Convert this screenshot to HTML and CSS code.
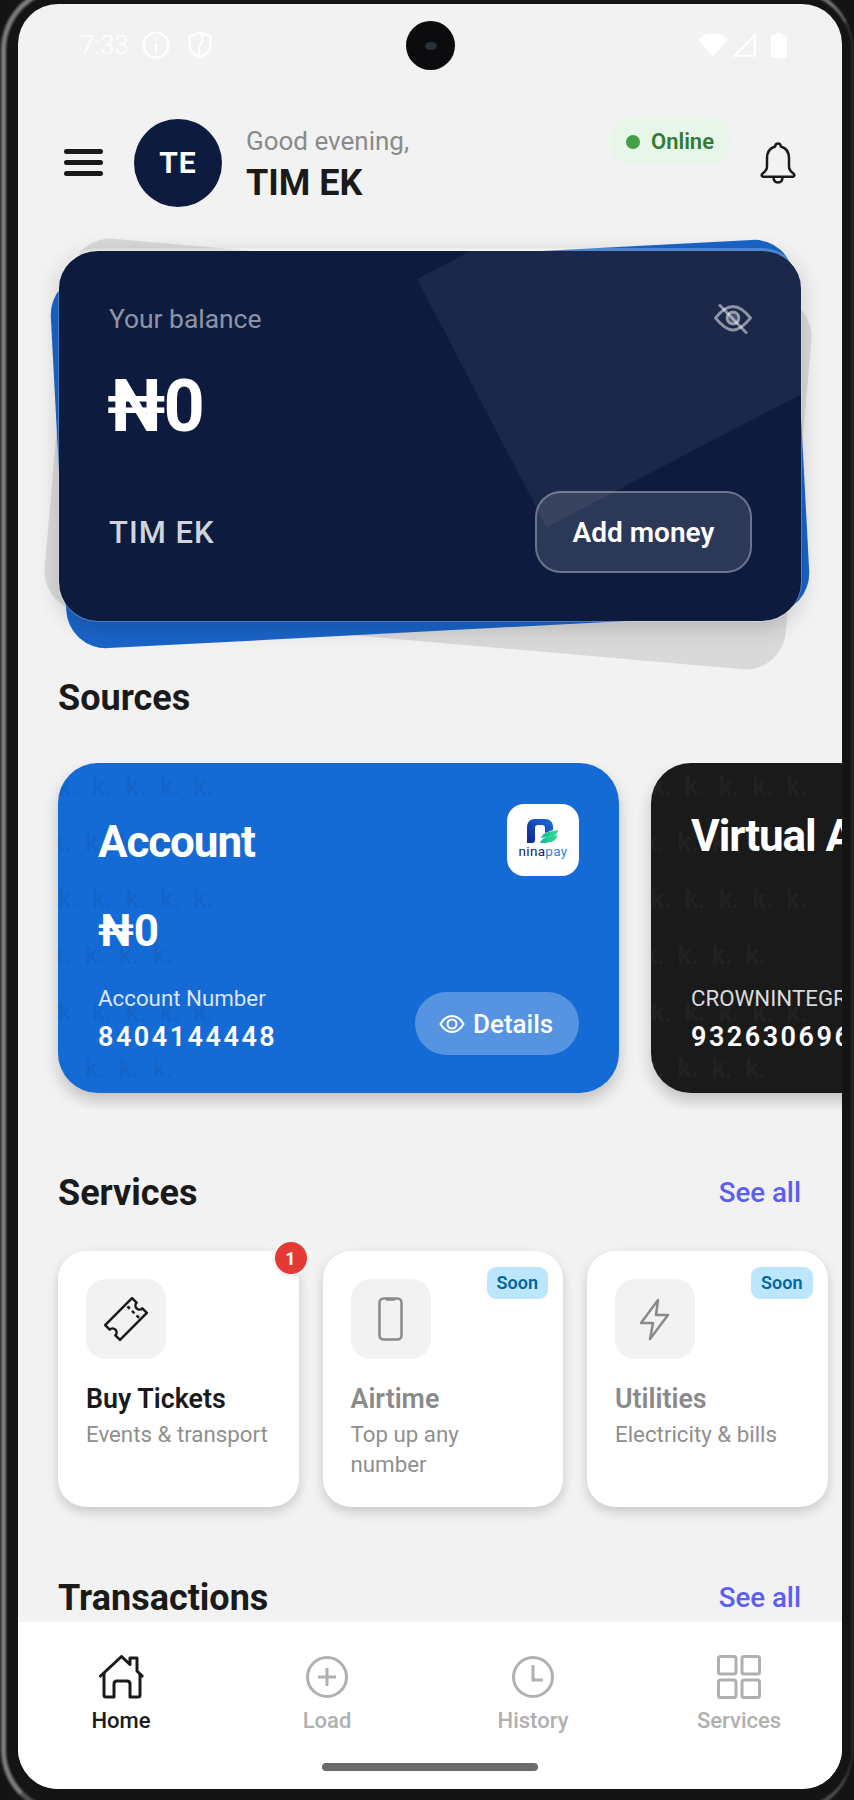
FILE: index.html
```html
<!DOCTYPE html>
<html lang="en">

<head>
    <meta charset="UTF-8">
    <meta name="viewport" content="width=device-width, initial-scale=1.0">
    <title>Home</title>
    <link rel="stylesheet" href="styles.css">
</head>

<body>
    <div class="device">
        <div class="screen">

            <div class="status-bar">
                <div class="status-left">
                    <span class="status-time">7:33</span>
                    <svg class="status-info" viewBox="0 0 28 28">
                        <circle cx="14" cy="14" r="12.5" fill="none" stroke="#fff" stroke-width="2.2" />
                        <path d="M14 12.5v8M14 7.5v2.5" fill="none" stroke="#fff" stroke-width="2.2" />
                    </svg>
                    <svg class="status-shield" viewBox="0 0 24 28">
                        <path d="M12 1.5 22.5 5.5v8c0 6-4 10.5-10.5 13C5.5 24 1.5 19.5 1.5 13.5v-8z M12 1.5c3 4 4 7 1 11-3 4-3 8-1 13.5" fill="none" stroke="#fff" stroke-width="2.2" />
                    </svg>
                </div>
                <div class="camera"><span class="camera-lens"></span></div>
                <div class="status-right">
                    <svg class="status-wifi" viewBox="0 0 30 24"><path d="M0 6.5C4 2.5 9 .5 15 .5s11 2 15 6L15 24z" fill="#fff" /></svg>
                    <svg class="status-signal" viewBox="0 0 24 24"><path d="M22.8 2.5V22.8H2.5z" fill="none" stroke="#fff" stroke-width="2" /></svg>
                    <svg class="status-battery" viewBox="0 0 16 25"><path d="M5 0h6v2h3c1 0 2 1 2 2v19c0 1-1 2-2 2H2c-1 0-2-1-2-2V4c0-1 1-2 2-2h3z" fill="#fff" /></svg>
                </div>
            </div>

            <div class="top-bar">
                <svg class="menu-icon" viewBox="0 0 40 27">
                    <rect x="0" y="0" width="39" height="5" rx="2.5" />
                    <rect x="0" y="11" width="39" height="5" rx="2.5" />
                    <rect x="0" y="22" width="39" height="5" rx="2.5" />
                </svg>
                <div class="avatar">TE</div>
                <div class="greeting">
                    <span class="greeting-hello">Good evening,</span>
                    <span class="greeting-name">TIM EK</span>
                </div>
                <div class="online-pill"><span class="online-dot"></span>Online</div>
                <svg class="bell-icon" viewBox="0 0 36 42">
                    <path d="M18 1.5c-1.5 0-2.6 1-2.9 3C9.5 6 7 10.5 7 16.5v8c0 3-1.8 5-4.3 7-1.7 1.3-1.2 3.2.8 3.2h29c2 0 2.5-1.9.8-3.2-2.5-2-4.3-4-4.3-7v-8c0-6-2.5-10.5-8.1-12-.3-2-1.4-3-2.9-3z" />
                    <path d="M13.5 35c0 3.5 1.8 5.5 4.5 5.5s4.5-2 4.5-5.5" />
                </svg>
            </div>

            <div class="content">
                <div class="balance-wrap">
                    <div class="back-card back-gray"></div>
                    <div class="back-card back-blue"></div>
                    <div class="balance-card">
                        <div class="balance-shape"></div>
                        <div class="balance-top">
                            <span class="balance-label">Your balance</span>
                            <svg class="eye-off" viewBox="0 0 38 30">
                                <path d="M1.5 14C8 6 13 2.5 19 2.5S30 6 36.5 14C30 22 25 26 19 26S8 22 1.5 14z" />
                                <circle class="eye-off-pupil" cx="19" cy="14" r="6" />
                                <path d="M5 .5l28 29" />
                            </svg>
                        </div>
                        <div class="balance-amount">₦0</div>
                        <div class="balance-bottom">
                            <span class="balance-name">TIM EK</span>
                            <span class="add-money">Add money</span>
                        </div>
                    </div>
                </div>

                <h2 class="section-title sources-title">Sources</h2>

                <div class="sources-row">
                    <div class="source-card source-blue">
                        <div class="watermark">
                            <span>k. k. k. k. k.</span>
                            <span class="shifted">k. k. k. k.</span>
                            <span>k. k. k. k. k.</span>
                            <span class="shifted">k. k. k. k.</span>
                            <span>k. k. k. k. k.</span>
                            <span class="shifted">k. k. k. k.</span>
                        </div>
                        <div class="source-head">
                            <span class="source-title">Account</span>
                            <div class="bank-logo">
                                <svg class="bank-mark" viewBox="0 0 32 25">
                                    <defs>
                                        <linearGradient id="ninaBlue" x1="1" y1="0" x2="0" y2="1">
                                            <stop offset="0" stop-color="#1d6fe0" />
                                            <stop offset="1" stop-color="#10238f" />
                                        </linearGradient>
                                        <linearGradient id="ninaGreen" x1="0" y1="0" x2="1" y2="0">
                                            <stop offset="0" stop-color="#0fb6a0" />
                                            <stop offset="1" stop-color="#35dc8c" />
                                        </linearGradient>
                                    </defs>
                                    <path d="M0 24V9C0 3 3 0 8 0h10c5 0 8 3 8 8v3l-8 3V9c0-2-1-3-3-3h-4c-2 0-3 1-3 3v12c0 2-1 3-3 3z" fill="url(#ninaBlue)" />
                                    <path d="M14 19c1-3 3-5 7-6l10-2c0 3-2 5-5 6z" fill="url(#ninaGreen)" />
                                    <path d="M13 24c1-3 3-5 7-6l10-2c0 4-3 6-6 7-4 1-7 1-11 1z" fill="url(#ninaGreen)" />
                                </svg>
                                <span class="bank-name">nina<span class="bank-name-pay">pay</span></span>
                            </div>
                        </div>
                        <div class="source-amount">₦0</div>
                        <div class="source-bottom">
                            <div class="source-info">
                                <span class="source-label">Account Number</span>
                                <span class="source-number">8404144448</span>
                            </div>
                            <div class="details-btn">
                                <svg class="details-eye" viewBox="0 0 26 20">
                                    <path d="M1.5 10C5 4 9 2 13 2s8 2 11.5 8C21 16 17 18 13 18S5 16 1.5 10z" />
                                    <circle cx="13" cy="10" r="4.5" />
                                </svg>
                                Details
                            </div>
                        </div>
                    </div>

                    <div class="source-card source-dark">
                        <div class="watermark">
                            <span>k. k. k. k. k.</span>
                            <span class="shifted">k. k. k. k.</span>
                            <span>k. k. k. k. k.</span>
                            <span class="shifted">k. k. k. k.</span>
                            <span>k. k. k. k. k.</span>
                            <span class="shifted">k. k. k. k.</span>
                        </div>
                        <div class="source-head">
                            <span class="source-title source-title-high">Virtual Account</span>
                        </div>
                        <div class="source-bottom">
                            <div class="source-info">
                                <span class="source-label">CROWNINTEGRATED</span>
                                <span class="source-number">9326306961</span>
                            </div>
                        </div>
                    </div>
                </div>

                <div class="section-head services-head">
                    <h2 class="section-title">Services</h2>
                    <span class="see-all">See all</span>
                </div>

                <div class="services-row">
                    <div class="service-card">
                        <span class="count-badge">1</span>
                        <div class="service-icon">
                            <svg class="ticket-icon" viewBox="0 0 44 44">
                                <g transform="rotate(-45 22 22)">
                                    <path d="M3 11.5H41V18a4 4 0 0 0 0 8V32.5H3V26a4 4 0 0 0 0-8z" />
                                    <path d="M32 14v17" stroke-dasharray="3.5 3" />
                                </g>
                            </svg>
                        </div>
                        <div class="service-name">Buy Tickets</div>
                        <div class="service-desc">Events &amp; transport</div>
                    </div>

                    <div class="service-card service-soon">
                        <span class="soon-badge">Soon</span>
                        <div class="service-icon">
                            <svg class="phone-icon" viewBox="0 0 25 44">
                                <rect x="1.5" y="1.5" width="22" height="41" rx="4" />
                                <path d="M8 2.5h9" />
                            </svg>
                        </div>
                        <div class="service-name">Airtime</div>
                        <div class="service-desc">Top up any number</div>
                    </div>

                    <div class="service-card service-soon">
                        <span class="soon-badge">Soon</span>
                        <div class="service-icon">
                            <svg class="bolt-icon" viewBox="0 0 32 43">
                                <path d="M19 2 2 25h12l-3 16 18-24H17z" />
                            </svg>
                        </div>
                        <div class="service-name">Utilities</div>
                        <div class="service-desc">Electricity &amp; bills</div>
                    </div>
                </div>

                <div class="section-head transactions-head">
                    <h2 class="section-title">Transactions</h2>
                    <span class="see-all">See all</span>
                </div>
            </div>

            <div class="bottom-nav">
                <div class="nav-items">
                    <div class="nav-item nav-active">
                        <svg class="nav-icon" viewBox="0 0 48 44">
                            <path d="M2.5 22 24.5 1.5 33 9.5V3h7v13l6 6" />
                            <path d="M7 18v22q0 2 2 2h8V29q0-3 3-3h10q3 0 3 3v13h8q2 0 2-2V18" />
                        </svg>
                        <span>Home</span>
                    </div>
                    <div class="nav-item">
                        <svg class="nav-icon" viewBox="0 0 44 44">
                            <circle cx="22" cy="22" r="19.5" />
                            <path d="M22 13v18M13 22h18" />
                        </svg>
                        <span>Load</span>
                    </div>
                    <div class="nav-item">
                        <svg class="nav-icon" viewBox="0 0 44 44">
                            <circle cx="22" cy="22" r="19.5" />
                            <path d="M22 10v15h10" />
                        </svg>
                        <span>History</span>
                    </div>
                    <div class="nav-item">
                        <svg class="nav-icon" viewBox="0 0 44 44">
                            <rect x="1.5" y="1.5" width="17.5" height="17.5" rx="2" />
                            <rect x="25" y="1.5" width="17.5" height="17.5" rx="2" />
                            <rect x="1.5" y="25" width="17.5" height="17.5" rx="2" />
                            <rect x="25" y="25" width="17.5" height="17.5" rx="2" />
                        </svg>
                        <span>Services</span>
                    </div>
                </div>
                <div class="home-bar"></div>
            </div>

        </div>
    </div>
</body>

</html>
```

FILE: styles.css
```css
body {
    margin: 0;
    padding: 0;
    font-family: 'Roboto', 'Liberation Sans', sans-serif;
    background-color: #141414;
}

.device {
    position: relative;
    width: 854px;
    height: 1800px;
    padding: 4px 12px 11px 18px;
    box-sizing: border-box;
    background-color: #141414;
    overflow: hidden;
}

.device::before {
    content: "";
    position: absolute;
    left: 1px;
    right: 1px;
    top: -14px;
    bottom: -14px;
    border: 5px solid #7d7d7d;
    border-right-width: 1px;
    border-color: #7d7d7d #444 #555 #7d7d7d;
    border-radius: 64px;
    filter: blur(1px);
}

.screen {
    position: relative;
    display: flex;
    flex-direction: column;
    height: 100%;
    background-color: #f2f2f2;
    border-radius: 40px;
    overflow: hidden;
}

/* status bar */
.status-bar {
    position: relative;
    display: flex;
    justify-content: space-between;
    align-items: center;
    height: 82px;
    flex: none;
    padding: 0 55px 0 62px;
    box-sizing: border-box;
}

.status-left,
.status-right {
    display: flex;
    align-items: center;
    color: white;
}

.status-time {
    font-size: 26px;
    font-weight: 300;
    width: 62px;
}

.status-info {
    width: 28px;
    height: 28px;
    margin-right: 18px;
}

.status-shield {
    width: 24px;
    height: 28px;
}

.camera {
    position: absolute;
    left: 388px;
    top: 17px;
    width: 49px;
    height: 49px;
    display: flex;
    justify-content: center;
    align-items: center;
    border-radius: 50%;
    background-color: #0c0c0e;
}

.camera-lens {
    width: 12px;
    height: 8px;
    border-radius: 50%;
    background-color: #26323e;
}

.status-wifi {
    width: 30px;
    height: 24px;
    margin-right: 4px;
}

.status-signal {
    width: 24px;
    height: 24px;
    margin-right: 15px;
}

.status-battery {
    width: 16px;
    height: 25px;
}

/* header */
.top-bar {
    display: flex;
    align-items: center;
    flex: none;
    height: 89px;
    margin-top: 32px;
    padding: 0 46px;
}

.menu-icon {
    width: 40px;
    height: 27px;
    fill: #1a1a1a;
    margin-right: 30px;
    flex: none;
}

.avatar {
    width: 88px;
    height: 88px;
    display: flex;
    justify-content: center;
    align-items: center;
    flex: none;
    margin-right: 24px;
    border-radius: 50%;
    background-color: #0d1b3e;
    color: white;
    font-size: 30px;
    font-weight: 700;
    letter-spacing: 1px;
}

.greeting {
    display: flex;
    flex-direction: column;
    flex: 1;
    padding-top: 5px;
}

.greeting-hello {
    font-size: 26px;
    line-height: 32px;
    color: #8a8a8a;
}

.greeting-name {
    font-size: 36px;
    line-height: 46px;
    font-weight: 700;
    color: #1a1a1a;
    margin-top: 3px;
}

.online-pill {
    display: flex;
    align-items: center;
    align-self: flex-start;
    height: 47px;
    padding: 0 16px;
    border-radius: 20px;
    background-color: #e8f5e9;
    color: #2e7d32;
    font-size: 22px;
    font-weight: 600;
}

.online-dot {
    width: 14px;
    height: 14px;
    margin-right: 11px;
    border-radius: 50%;
    background-color: #43a047;
}

.bell-icon {
    width: 36px;
    height: 42px;
    margin-left: 30px;
    fill: none;
    stroke: #1a1a1a;
    stroke-width: 2.5;
    stroke-linejoin: round;
    flex: none;
}

/* scrolling content, cut off by the bottom nav */
.content {
    flex: 1;
    min-height: 0;
    overflow: hidden;
}

.balance-wrap {
    position: relative;
    width: 744px;
    height: 374px;
    margin: 41px 0 0 40px;
}

.back-card {
    position: absolute;
    left: 0;
    top: 0;
    width: 100%;
    height: 100%;
    border-radius: 40px;
}

.back-gray {
    background-color: rgba(0, 0, 0, 0.1);
    transform: translate(-2px, 19px) rotate(5deg);
}

.back-blue {
    background-color: #1a64c8;
    transform: translate(0, 9px) rotate(-3deg);
}

.balance-card {
    position: relative;
    display: flex;
    flex-direction: column;
    height: 100%;
    padding: 53px 49px 48px 50px;
    box-sizing: border-box;
    border: 1px solid rgba(255, 255, 255, 0.22);
    border-top-width: 3px;
    border-radius: 40px;
    background-color: #0d1b3e;
    background-clip: padding-box;
    box-shadow: 0 6px 22px rgba(0, 0, 0, 0.16);
    overflow: hidden;
    color: white;
}

.balance-shape {
    position: absolute;
    left: 358px;
    top: 28px;
    width: 600px;
    height: 280px;
    background-color: rgba(255, 255, 255, 0.06);
    transform-origin: 0 0;
    transform: rotate(-27.6deg);
}

.balance-top {
    position: relative;
    display: flex;
    justify-content: space-between;
    align-items: center;
}

.balance-label {
    font-size: 26.4px;
    line-height: 30px;
    color: rgba(255, 255, 255, 0.55);
}

.eye-off {
    width: 38px;
    height: 30px;
    fill: none;
    stroke: rgba(255, 255, 255, 0.5);
    stroke-width: 2.8;
}

.eye-off-pupil {
    fill: rgba(255, 255, 255, 0.2);
}

.balance-amount {
    position: relative;
    margin: 28px 0 0 -2px;
    font-size: 72px;
    line-height: 90px;
    font-weight: 700;
    letter-spacing: -2px;
}

.balance-bottom {
    position: relative;
    display: flex;
    justify-content: space-between;
    align-items: center;
    margin-top: auto;
}

.balance-name {
    font-size: 31px;
    font-weight: 500;
    letter-spacing: 1px;
    color: rgba(255, 255, 255, 0.82);
}

.add-money {
    width: 217px;
    height: 82px;
    display: flex;
    justify-content: center;
    align-items: center;
    box-sizing: border-box;
    border: 2px solid rgba(255, 255, 255, 0.3);
    border-radius: 26px;
    background-color: rgba(255, 255, 255, 0.13);
    font-size: 28px;
    font-weight: 600;
}

.section-title {
    margin: 0;
    padding-top: 2px;
    font-size: 36px;
    line-height: 40px;
    font-weight: 700;
    color: #1a1a1a;
}

.sources-title {
    margin: 54px 0 0 40px;
}

.sources-row {
    display: flex;
    gap: 32px;
    margin-top: 45px;
    padding: 0 0 16px 40px;
    overflow: hidden;
}

.source-card {
    position: relative;
    display: flex;
    flex-direction: column;
    flex: none;
    width: 561px;
    height: 330px;
    padding: 41px 40px 38px 40px;
    box-sizing: border-box;
    border-radius: 40px;
    box-shadow: 0 8px 16px rgba(0, 0, 0, 0.2);
    overflow: hidden;
    color: white;
}

.source-blue {
    background-color: #156bd6;
}

.source-dark {
    background-color: #1a1a1a;
}

.watermark {
    position: absolute;
    left: 0;
    top: -4px;
    display: flex;
    flex-direction: column;
    font-size: 25px;
    line-height: 56.4px;
    font-weight: 700;
    word-spacing: 7px;
    white-space: pre;
    color: rgba(0, 0, 0, 0.06);
}

.source-dark .watermark {
    color: rgba(255, 255, 255, 0.05);
}

.shifted {
    margin-left: -7px;
}

.source-head {
    position: relative;
    display: flex;
    justify-content: space-between;
    align-items: flex-start;
}

.source-title {
    margin-top: 13px;
    font-size: 44px;
    line-height: 50px;
    font-weight: 700;
    letter-spacing: -1.1px;
}

.source-title-high {
    margin-top: 7px;
    white-space: nowrap;
}

.bank-logo {
    display: flex;
    flex-direction: column;
    align-items: center;
    width: 72px;
    height: 72px;
    padding-top: 15px;
    box-sizing: border-box;
    border-radius: 17px;
    background-color: white;
}

.bank-mark {
    width: 32px;
    height: 25px;
}

.bank-name {
    font-size: 13.5px;
    line-height: 15px;
    color: #10235f;
    letter-spacing: 0.3px;
}

.bank-name-pay {
    color: #2f7ff0;
}

.source-amount {
    position: relative;
    margin-top: 30px;
    font-size: 44px;
    line-height: 50px;
    font-weight: 700;
}

.source-bottom {
    position: relative;
    display: flex;
    justify-content: space-between;
    align-items: flex-end;
    margin-top: auto;
}

.source-info {
    display: flex;
    flex-direction: column;
}

.source-label {
    font-size: 22.3px;
    line-height: 30px;
    color: rgba(255, 255, 255, 0.85);
    white-space: nowrap;
}

.source-number {
    margin-top: 6px;
    font-size: 27px;
    line-height: 36px;
    font-weight: 600;
    letter-spacing: 2.5px;
}

.details-btn {
    display: flex;
    align-items: center;
    width: 164px;
    height: 63px;
    padding-left: 24px;
    box-sizing: border-box;
    border-radius: 32px;
    background-color: rgba(255, 255, 255, 0.28);
    font-size: 26px;
    font-weight: 500;
}

.details-eye {
    width: 26px;
    height: 20px;
    margin-right: 8px;
    fill: none;
    stroke: white;
    stroke-width: 2;
}

.section-head {
    display: flex;
    justify-content: space-between;
    align-items: center;
    padding: 0 41px 0 40px;
}

.services-head {
    margin-top: 62px;
}

.see-all {
    font-size: 27.7px;
    font-weight: 500;
    color: #5b5ff0;
}

.services-row {
    display: flex;
    gap: 24px;
    margin-top: 38px;
    padding-left: 40px;
}

.service-card {
    position: relative;
    flex: none;
    width: 240.5px;
    height: 256px;
    padding: 28px 29px 0 28px;
    box-sizing: border-box;
    border-radius: 28px;
    background-color: white;
    box-shadow: 0 5px 12px rgba(0, 0, 0, 0.17);
}

.service-icon {
    display: flex;
    justify-content: center;
    align-items: center;
    width: 80px;
    height: 80px;
    border-radius: 20px;
    background-color: #f2f2f2;
}

.service-name {
    margin-top: 23px;
    font-size: 26.8px;
    line-height: 34px;
    font-weight: 600;
    color: #1a1a1a;
}

.service-desc {
    margin-top: 3px;
    font-size: 22.3px;
    line-height: 30px;
    color: #8f8f8f;
}

.service-soon .service-name {
    color: #8a8a8a;
}

.count-badge {
    position: absolute;
    right: -11px;
    top: -12px;
    display: flex;
    justify-content: center;
    align-items: center;
    width: 32px;
    height: 32px;
    border: 3px solid #f2f2f2;
    border-radius: 50%;
    background-color: #e53935;
    color: white;
    font-size: 18px;
    font-weight: 700;
}

.soon-badge {
    position: absolute;
    right: 15px;
    top: 16px;
    padding: 0 10px;
    height: 32px;
    line-height: 32px;
    border-radius: 9px;
    background-color: #bbe6fc;
    color: #01679f;
    font-size: 18px;
    font-weight: 600;
}

.ticket-icon {
    width: 44px;
    height: 44px;
    fill: none;
    stroke: #1a1a1a;
    stroke-width: 2.5;
    stroke-linejoin: round;
}

.phone-icon {
    width: 25px;
    height: 44px;
    fill: none;
    stroke: #8a8a8a;
    stroke-width: 2.5;
}

.bolt-icon {
    width: 32px;
    height: 43px;
    fill: none;
    stroke: #8a8a8a;
    stroke-width: 2.5;
    stroke-linejoin: round;
}

.transactions-head {
    margin-top: 69px;
}

/* bottom nav */
.bottom-nav {
    display: flex;
    flex-direction: column;
    flex: none;
    height: 167px;
    box-sizing: border-box;
    background-color: white;
}

.nav-items {
    display: grid;
    grid-template-columns: repeat(4, 1fr);
    padding-top: 33px;
}

.nav-item {
    display: flex;
    flex-direction: column;
    align-items: center;
    font-size: 22px;
    line-height: 28px;
    font-weight: 500;
    color: #b0b0b0;
}

.nav-icon {
    width: 44px;
    height: 44px;
    margin-bottom: 8px;
    fill: none;
    stroke: #b0b0b0;
    stroke-width: 3;
}

.nav-active {
    color: #1a1a1a;
}

.nav-active .nav-icon {
    width: 48px;
    stroke: #1a1a1a;
    stroke-linejoin: round;
}

.home-bar {
    width: 216px;
    height: 8px;
    margin: 28px auto 0;
    border-radius: 4px;
    background-color: #6b6b6b;
}
```
